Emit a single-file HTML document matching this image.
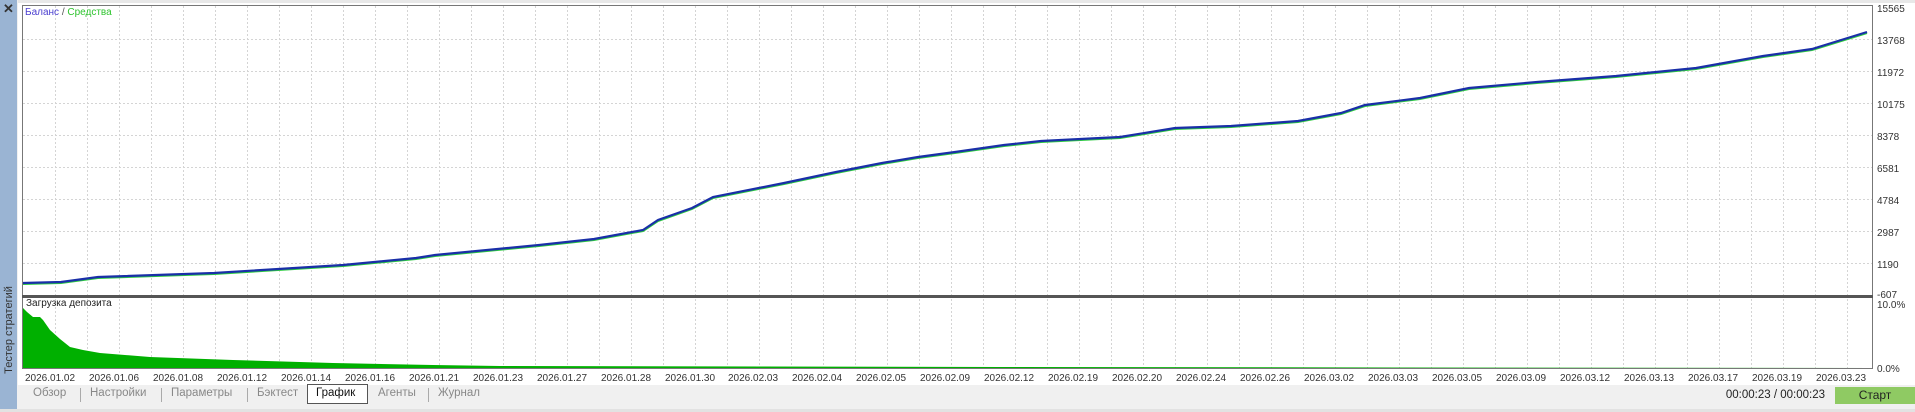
<!DOCTYPE html>
<html><head><meta charset="utf-8"><style>
html,body{margin:0;padding:0;width:1915px;height:412px;overflow:hidden;background:#f0f0f0;font-family:"Liberation Sans",sans-serif;}
.side{position:absolute;left:0;top:0;width:17px;height:412px;background:#9ab4d3;}
.vt{position:absolute;left:-62px;top:322px;width:142px;height:16px;transform:rotate(-90deg);font-size:11px;color:#333;text-align:center;line-height:16px;}
.x{position:absolute;left:3px;top:1px;font-size:13px;font-weight:bold;color:#333;}
.tab{position:absolute;top:387px;font-size:11.5px;color:#888;}
.div{position:absolute;top:388px;width:1px;height:14px;background:#aaa;}
</style></head><body>
<div class="side"><div class="x">✕</div><div class="vt">Тестер стратегий</div></div>
<svg width="1915" height="412" style="position:absolute;left:0;top:0" xmlns="http://www.w3.org/2000/svg">
<rect x="18" y="0" width="1897" height="385" fill="#fff"/>
<rect x="18" y="0" width="1897" height="3" fill="#e8e8e8"/>
<g stroke="#d4d4d4" stroke-dasharray="2,2" stroke-width="1">
<path id="vg" d="M55.5 6V295M87.5 6V295M119.5 6V295M151.5 6V295M183.5 6V295M215.5 6V295M247.5 6V295M279.5 6V295M311.5 6V295M343.5 6V295M375.5 6V295M407.5 6V295M439.5 6V295M471.5 6V295M503.5 6V295M535.5 6V295M567.5 6V295M599.5 6V295M631.5 6V295M663.5 6V295M695.5 6V295M727.5 6V295M759.5 6V295M791.5 6V295M823.5 6V295M855.5 6V295M887.5 6V295M919.5 6V295M951.5 6V295M983.5 6V295M1015.5 6V295M1047.5 6V295M1079.5 6V295M1111.5 6V295M1143.5 6V295M1175.5 6V295M1207.5 6V295M1239.5 6V295M1271.5 6V295M1303.5 6V295M1335.5 6V295M1367.5 6V295M1399.5 6V295M1431.5 6V295M1463.5 6V295M1495.5 6V295M1527.5 6V295M1559.5 6V295M1591.5 6V295M1623.5 6V295M1655.5 6V295M1687.5 6V295M1719.5 6V295M1751.5 6V295M1783.5 6V295M1815.5 6V295M1847.5 6V295"/>
<path d="M55.5 299V368M87.5 299V368M119.5 299V368M151.5 299V368M183.5 299V368M215.5 299V368M247.5 299V368M279.5 299V368M311.5 299V368M343.5 299V368M375.5 299V368M407.5 299V368M439.5 299V368M471.5 299V368M503.5 299V368M535.5 299V368M567.5 299V368M599.5 299V368M631.5 299V368M663.5 299V368M695.5 299V368M727.5 299V368M759.5 299V368M791.5 299V368M823.5 299V368M855.5 299V368M887.5 299V368M919.5 299V368M951.5 299V368M983.5 299V368M1015.5 299V368M1047.5 299V368M1079.5 299V368M1111.5 299V368M1143.5 299V368M1175.5 299V368M1207.5 299V368M1239.5 299V368M1271.5 299V368M1303.5 299V368M1335.5 299V368M1367.5 299V368M1399.5 299V368M1431.5 299V368M1463.5 299V368M1495.5 299V368M1527.5 299V368M1559.5 299V368M1591.5 299V368M1623.5 299V368M1655.5 299V368M1687.5 299V368M1719.5 299V368M1751.5 299V368M1783.5 299V368M1815.5 299V368M1847.5 299V368"/>
<path d="M23 39.5H1872M23 71.5H1872M23 103.5H1872M23 135.5H1872M23 167.5H1872M23 199.5H1872M23 231.5H1872M23 263.5H1872"/>
</g>
<path d="M23 369 L23 308 L27 312 L33 317 L40 317 L43 320 L50 330 L60 339 L70 347 L83 350 L100 353 L150 357 L233 360 L333 363 L433 365 L500 366 L1000 367 L1872 368 L1872 369 Z" fill="#00b000"/>
<polyline fill="none" stroke="#2ecc40" stroke-width="2" points="23,284 61,283 98,278 214,274 343,266 416,259 435,256 539,246 594,240 643,231 658,221 692,209 713,198 784,184 836,173 882,164 918,158 955,153 1004,146 1041,142 1120,138 1175,129 1231,127 1298,122 1341,114 1365,106 1420,99 1469,89 1537,83 1616,77 1696,69 1763,57 1812,50 1825,46 1867,33"/>
<polyline fill="none" stroke="#1a2fa8" stroke-width="2.2" points="23,283 61,282 98,277 214,273 343,265 416,258 435,255 539,245 594,239 643,230 658,220 692,208 713,197 784,183 836,172 882,163 918,157 955,152 1004,145 1041,141 1120,137 1175,128 1231,126 1298,121 1341,113 1365,105 1420,98 1469,88 1537,82 1616,76 1696,68 1763,56 1812,49 1825,45 1867,32"/>
<rect x="22.5" y="5.5" width="1850" height="363" fill="none" stroke="#777" stroke-width="1"/>
<rect x="22" y="295" width="1851" height="3" fill="#555"/>
<line x1="23" y1="298.5" x2="1872" y2="298.5" stroke="#fff"/>
<g font-size="10" fill="#333" font-family="Liberation Sans, sans-serif">
<text x="1877" y="12">15565</text><text x="1877" y="44">13768</text><text x="1877" y="76">11972</text><text x="1877" y="108">10175</text><text x="1877" y="140">8378</text><text x="1877" y="172">6581</text><text x="1877" y="204">4784</text><text x="1877" y="236">2987</text><text x="1877" y="268">1190</text><text x="1877" y="298">-607</text>
<text x="1877" y="308">10.0%</text><text x="1877" y="372">0.0%</text>
<text x="26" y="306" fill="#222">Загрузка депозита</text>
</g>
<text x="25" y="15" font-size="10"><tspan fill="#4b3fd0">Баланс</tspan><tspan fill="#555"> / </tspan><tspan fill="#2ec42e">Средства</tspan></text>
<g font-size="10" fill="#333">
<text x="25" y="381">2026.01.02</text><text x="89" y="381">2026.01.06</text><text x="153" y="381">2026.01.08</text><text x="217" y="381">2026.01.12</text><text x="281" y="381">2026.01.14</text><text x="345" y="381">2026.01.16</text><text x="409" y="381">2026.01.21</text><text x="473" y="381">2026.01.23</text><text x="537" y="381">2026.01.27</text><text x="601" y="381">2026.01.28</text><text x="665" y="381">2026.01.30</text><text x="728" y="381">2026.02.03</text><text x="792" y="381">2026.02.04</text><text x="856" y="381">2026.02.05</text><text x="920" y="381">2026.02.09</text><text x="984" y="381">2026.02.12</text><text x="1048" y="381">2026.02.19</text><text x="1112" y="381">2026.02.20</text><text x="1176" y="381">2026.02.24</text><text x="1240" y="381">2026.02.26</text><text x="1304" y="381">2026.03.02</text><text x="1368" y="381">2026.03.03</text><text x="1432" y="381">2026.03.05</text><text x="1496" y="381">2026.03.09</text><text x="1560" y="381">2026.03.12</text><text x="1624" y="381">2026.03.13</text><text x="1688" y="381">2026.03.17</text><text x="1752" y="381">2026.03.19</text><text x="1816" y="381">2026.03.23</text>
</g>
<rect x="18" y="385" width="1897" height="27" fill="#f0f0f0"/>
<rect x="307.5" y="384.5" width="60" height="19" fill="#fff" stroke="#555"/>
<rect x="0" y="409" width="1915" height="3" fill="#e2e2e2"/>
<rect x="1835" y="387" width="80" height="17" fill="#8fca63"/>
</svg>
<div class="tab" style="left:33px">Обзор</div><div class="div" style="left:80px"></div>
<div class="tab" style="left:90px">Настройки</div><div class="div" style="left:161px"></div>
<div class="tab" style="left:171px">Параметры</div><div class="div" style="left:247px"></div>
<div class="tab" style="left:257px">Бэктест</div>
<div class="tab" style="left:316px;color:#111">График</div>
<div class="tab" style="left:378px">Агенты</div><div class="div" style="left:428px"></div>
<div class="tab" style="left:438px">Журнал</div>
<div style="position:absolute;right:90px;top:389px;font-size:11.5px;color:#222">00:00:23 / 00:00:23</div>
<div style="position:absolute;left:1835px;width:80px;top:388px;text-align:center;font-size:12px;color:#222">Старт</div>
</body></html>
